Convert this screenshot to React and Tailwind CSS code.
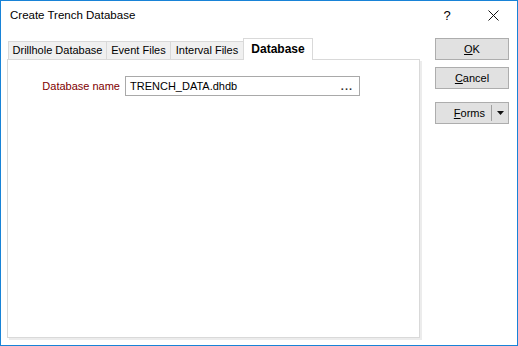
import React from "react";

// Small Win10 style dialog: tabs on the left, action buttons on the right
const tabs = [
  { label: "Drillhole Database", w: "w-[98px]" },
  { label: "Event Files", w: "w-[64px]" },
  { label: "Interval Files", w: "w-[73px]" },
];

function Tab({ label, w }) {
  return (
    <div className={`${w} h-[18px] flex items-center justify-center border-l border-t border-[#d9d9d9] bg-[#f0f0f0] text-black`}>
      {label}
    </div>
  );
}

function Button({ children }) {
  return (
    <div className="w-[74px] h-[22px] flex items-center justify-center border border-[#adadad] bg-[#e1e1e1] text-black">
      {children}
    </div>
  );
}

export default function App() {
  return (
    <div className="w-[518px] h-[346px] border border-[#1883d7] bg-white flex flex-col font-['Liberation_Sans',sans-serif] text-[11px] text-black overflow-hidden">
      {/* Title bar */}
      <div className="h-[29px] flex items-center shrink-0">
        <div className="pl-[9px] text-[11.5px] text-black">Create Trench Database</div>
        <div className="ml-auto flex h-full">
          <div className="w-[46px] h-full flex items-center justify-center text-[13px] pr-[2px]">?</div>
          <div className="w-[46px] h-full flex items-center justify-center pr-[1px]">
            <svg width="11" height="11" viewBox="0 0 11 11">
              <path d="M0.5 0.5 L10.5 10.5 M10.5 0.5 L0.5 10.5" stroke="#111" strokeWidth="1" fill="none" />
            </svg>
          </div>
        </div>
      </div>

      {/* Body */}
      <div className="flex pl-[6px] pt-[8px]">
        <div className="flex flex-col w-[415px]">
          <div className="flex items-end h-[21px] pl-[1px] relative z-10">
            {tabs.map(t => <Tab key={t.label} {...t} />)}
            <div className="w-[70px] h-[22px] -mb-px flex items-start justify-center pt-[3px] border-l border-t border-r border-[#d9d9d9] bg-white font-bold text-[12px] leading-[14px]">
              Database
            </div>
          </div>
          <div className="w-[413px] h-[279px] border border-[#d9d9d9] bg-white shadow-[2px_2px_0_#ececec] pt-[16px]">
            <div className="flex items-center">
              <div className="w-[112px] flex justify-end text-[#800000]">Database name</div>
              <div className="ml-[5px] w-[235px] h-[20px] border border-[#a9a9a9] flex items-center justify-between pl-[4px] pr-[6px]">
                <span>TRENCH_DATA.dhdb</span>
                <span className="font-bold tracking-[1px] text-[#333]">...</span>
              </div>
            </div>
          </div>
        </div>

        <div className="ml-[13px] flex flex-col">
          <Button><span><u>O</u>K</span></Button>
          <div className="mt-[7px]">
            <Button><span><u>C</u>ancel</span></Button>
          </div>
          <div className="mt-[13px] w-[74px] h-[22px] flex items-center border border-[#adadad] bg-[#e1e1e1]">
            <div className="flex-1 flex items-center justify-end pr-[6px]"><span><u>F</u>orms</span></div>
            <div className="w-px h-[16px] bg-[#a0a0a0]" />
            <div className="w-[16px] flex items-center justify-center">
              <svg width="7" height="4" viewBox="0 0 7 4"><path d="M0 0 H7 L3.5 4 Z" fill="#111" /></svg>
            </div>
          </div>
        </div>
      </div>
    </div>
  );
}
